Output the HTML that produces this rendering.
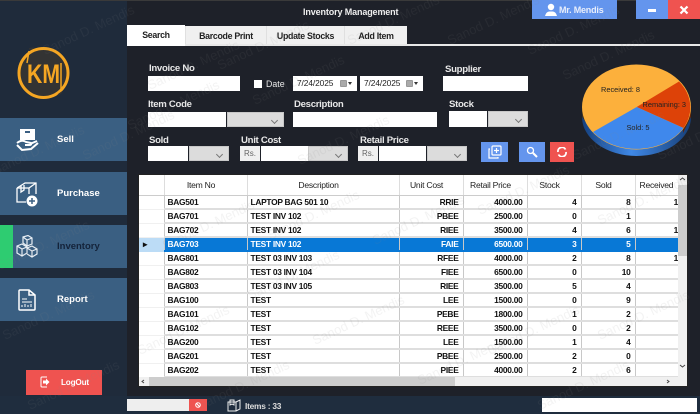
<!DOCTYPE html>
<html><head><meta charset="utf-8"><style>
*{box-sizing:border-box}
html,body{margin:0;padding:0;background:#1e2129}
body{width:700px;height:414px;overflow:hidden;position:relative;font-family:"Liberation Sans",sans-serif;font-size:9px;color:#111}
#root{position:absolute;left:0;top:0;width:700px;height:414px;background:#1e2129;filter:blur(.3px)}
.a{position:absolute}
.l{position:absolute;color:#e8e8e8;font-size:9.6px;letter-spacing:-.3px;font-weight:bold;line-height:12px;white-space:nowrap}
.w{position:absolute;background:#fff}
.g{position:absolute;background:#dcdcdc;border:1px solid #c8c8c8}
.g:after{content:"";position:absolute;right:6px;top:5px;width:4px;height:4px;border-right:1px solid #777;border-bottom:1px solid #777;transform:rotate(45deg)}
.rs{position:absolute;background:#f0f0f0;color:#666;text-align:center;font-size:8px;line-height:15px}
.nav{position:absolute;left:0;width:127px;height:43px;background:#3a5f82;color:#fff;font-weight:bold;font-size:9.5px;line-height:43px;padding-left:57px}
.tab{position:absolute;top:26px;height:18px;background:#f0f0f0;text-align:center;font-weight:bold;font-size:8.8px;letter-spacing:-.3px;line-height:20px;color:#222;border-left:1px solid #e0e0e0}
.dp{position:absolute;top:76px;height:15px;background:#fff;font-size:8.4px;letter-spacing:-.1px;line-height:15px;padding-left:4px;color:#222}
.dp i{position:absolute;right:10px;top:4px;width:7px;height:7px;background:#aaa;border:1px solid #999;border-radius:1px}
.dp b{position:absolute;right:5px;top:6px;width:0;height:0;border-left:2px solid transparent;border-right:2px solid transparent;border-top:3px solid #333}
#grid{position:absolute;left:138px;top:174px;width:550px;height:213px;background:#fff;border:1px solid #222;overflow:hidden}
table{border-collapse:collapse;table-layout:fixed;position:absolute;left:0;top:0;width:539px;font-size:8.4px;letter-spacing:-.28px;font-weight:bold;color:#111}
td,th{height:14px;padding:0 3px;border-right:1px solid #c8c8c8;border-bottom:2px solid #dedede;overflow:hidden;white-space:nowrap;line-height:12px}
th{height:20px;font-weight:normal;font-size:8.6px;letter-spacing:-.25px;color:#222;border-right:1px solid #ddd;border-bottom:1px solid #ccc;padding-right:12px}
td:nth-child(1){border-bottom:1px solid #f0f0f0}
td:nth-child(n+4){text-align:right;padding-right:4px}
td:nth-child(8){padding-right:0;border-right:0}
tr.s td{background:#0878d6;color:#fff;border-bottom-color:#0878d6}
tr.s td:first-child{background:#bcdcf6;color:#111;border-bottom-color:#bcdcf6;padding-left:4px;text-align:left}
</style></head><body><div id="root">
<div class="a" style="left:0;top:0;width:127px;height:414px;background:#1f2b3b"></div>
<div class="a" style="left:0;top:396px;width:700px;height:18px;background:#1f2d3e"></div>
<div class="a" style="left:0;top:0;width:700px;height:1px;background:#3a3a3a"></div>

<svg class="a" style="left:15px;top:45px" width="58" height="58" viewBox="0 0 58 58">
<circle cx="28.500" cy="28" r="24.500" fill="#333" stroke="#f5a623" stroke-width="3"/>
<path d="M12 18 L14 6 M46 18 L46 46" stroke="#f5a623" stroke-width="1.500" fill="none"/>
<path d="M14 4 L19 3 M43 50 L47 47" stroke="#333" stroke-width="1.500" fill="none"/>
<text x="12" y="38" font-family="Liberation Sans" font-weight="bold" font-size="27" fill="#f5a623" textLength="33" lengthAdjust="spacingAndGlyphs">KM</text>
</svg>

<div class="nav" style="top:118px">Sell</div>
<div class="nav" style="top:172px">Purchase</div>
<div class="nav" style="top:225px;color:#14233a;padding-left:57px"><span class="a" style="left:0;top:0;width:13px;height:43px;background:#2ecc71"></span>Inventory</div>
<div class="nav" style="top:278px">Report</div>

<svg class="a" style="left:14px;top:126px" width="26" height="26" viewBox="0 0 26 26"><rect x="6" y="3" width="15" height="11" fill="#fff"/><rect x="11" y="5" width="5" height="2" fill="#3a5f82"/><path d="M3 17 Q8 13 12 16 L17 17 Q18 19 15 19 L11 19 M16 18 L23 15 M3 19 L8 24 L17 23 L24 17" stroke="#fff" stroke-width="2" fill="none"/></svg>
<svg class="a" style="left:15px;top:181px" width="24" height="26" viewBox="0 0 24 26"><path d="M2 7 L10 2 L21 2 L21 13 M2 7 L2 21 L11 21 M2 7 L14 7 L21 2 M14 7 L14 13 M6 5 L6 11 L9 9 L9 4" stroke="#fff" stroke-width="1.300" fill="none"/><circle cx="17" cy="20" r="5.500" fill="#fff"/><path d="M14 20H20M17 17V23" stroke="#3a5f82" stroke-width="1.500"/></svg>
<svg class="a" style="left:15px;top:235px" width="24" height="24" viewBox="0 0 24 24" fill="none" stroke="#e8eef4" stroke-width="1.200"><path d="M8 2 L13 0.500 L17 3 L17 9 L12 11 L8 8 Z M8 2 L12 5 L17 3 M12 5 L12 11"/><path d="M2 11 L7 9 L12 12 L12 18 L7 21 L2 18 Z M2 11 L7 14 L12 12 M7 14 L7 21"/><path d="M12 13 L17 11 L22 14 L22 19 L17 22 L12 19 M12 13 L17 16 L22 14 M17 16 L17 22"/></svg>
<svg class="a" style="left:18px;top:289px" width="18" height="22" viewBox="0 0 18 22" fill="none" stroke="#fff" stroke-width="1.500"><path d="M1 2 Q1 1 2 1 L11 1 L17 6 L17 20 Q17 21 16 21 L2 21 Q1 21 1 20 Z M11 1 L11 6 L17 6"/><path d="M4 10H9M4 13H14M4 18V16M7 18V15M10 18V16M13 18V15" stroke-width="1"/></svg>

<div class="a" style="left:26px;top:370px;width:76px;height:25px;background:#ef5350;color:#fff;font-weight:bold;font-size:8.200px;letter-spacing:-.2px;line-height:25px;padding-left:35px">LogOut</div>
<svg class="a" style="left:40px;top:376px" width="10" height="12" viewBox="0 0 10 12"><path d="M7 1 L2 1 Q1 1 1 2 L1 10 Q1 11 2 11 L7 11" stroke="#fff" fill="none"/><path d="M3 4.500H6V2.500L9.500 6L6 9.500V7.500H3Z" fill="#fff"/></svg>

<div class="a" style="left:303px;top:6px;color:#eee;font-weight:bold;font-size:9px;letter-spacing:-.13px;line-height:12px;white-space:nowrap">Inventory Management</div>
<div class="a" style="left:532px;top:0;width:85px;height:19px;background:#6495ed;color:#e8eefc;font-weight:bold;font-size:9px;letter-spacing:-.2px;line-height:20px;padding-left:27px">Mr. Mendis</div>
<svg class="a" style="left:544px;top:3px" width="14" height="14" viewBox="0 0 14 14"><circle cx="7" cy="4" r="3.200" fill="#fff"/><path d="M1 13 Q2 9 5 8.500 L9 8.500 Q12 9 13 13Z" fill="#fff"/></svg>
<div class="a" style="left:636px;top:0;width:32px;height:19px;background:#6495ed"></div>
<div class="a" style="left:648px;top:9px;width:8px;height:3px;background:#fff"></div>
<div class="a" style="left:668px;top:0;width:32px;height:19px;background:#ef5350"></div>
<svg class="a" style="left:679px;top:5px" width="10" height="10" viewBox="0 0 10 10"><path d="M1.500 1.500L8.500 8.500M8.500 1.500L1.500 8.500" stroke="#fff" stroke-width="2.200"/></svg>

<div class="a" style="left:127px;top:44px;width:573px;height:2px;background:#e8e8e8"></div>
<div class="a" style="left:127px;top:25px;width:58px;height:21px;background:#fff;text-align:center;font-weight:bold;font-size:8.800px;letter-spacing:-.3px;line-height:20px;color:#222">Search</div>
<div class="tab" style="left:185px;width:81px">Barcode Print</div>
<div class="tab" style="left:266px;width:78px">Update Stocks</div>
<div class="tab" style="left:344px;width:63px">Add Item</div>

<div class="l" style="left:149px;top:63px">Invoice No</div>
<div class="w" style="left:148px;top:76px;width:92px;height:15px"></div>
<div class="w" style="left:254px;top:80px;width:8px;height:8px"></div>
<div class="l" style="left:266px;top:78px;font-size:8.800px;letter-spacing:0;font-weight:normal">Date</div>
<div class="dp" style="left:293px;width:64px">7/24/2025<i></i><b></b></div>
<div class="dp" style="left:360px;width:63px">7/24/2025<i></i><b></b></div>
<div class="l" style="left:445px;top:64px">Supplier</div>
<div class="w" style="left:443px;top:76px;width:85px;height:15px"></div>

<div class="l" style="left:148px;top:99px">Item Code</div>
<div class="w" style="left:148px;top:112px;width:78px;height:15px"></div>
<div class="g" style="left:227px;top:112px;width:57px;height:15px"></div>
<div class="l" style="left:294px;top:99px">Description</div>
<div class="w" style="left:293px;top:112px;width:144px;height:15px"></div>
<div class="l" style="left:449px;top:99px">Stock</div>
<div class="w" style="left:449px;top:111px;width:38px;height:16px"></div>
<div class="g" style="left:488px;top:111px;width:40px;height:16px"></div>

<div class="l" style="left:149px;top:135px">Sold</div>
<div class="w" style="left:148px;top:146px;width:40px;height:15px"></div>
<div class="g" style="left:189px;top:146px;width:40px;height:15px"></div>
<div class="l" style="left:241px;top:135px">Unit Cost</div>
<div class="rs" style="left:240px;top:146px;width:20px;height:15px">Rs.</div>
<div class="w" style="left:261px;top:146px;width:47px;height:15px"></div>
<div class="g" style="left:308px;top:146px;width:40px;height:15px"></div>
<div class="l" style="left:360px;top:135px">Retail Price</div>
<div class="rs" style="left:358px;top:146px;width:20px;height:15px">Rs.</div>
<div class="w" style="left:379px;top:146px;width:47px;height:15px"></div>
<div class="g" style="left:427px;top:146px;width:40px;height:15px"></div>

<div class="a" style="left:481px;top:142px;width:27px;height:20px;background:#6495ed"></div>
<svg class="a" style="left:488px;top:145px" width="14" height="14" viewBox="0 0 14 14" fill="none" stroke="#fff" stroke-width="1.200"><rect x="4" y="1" width="9" height="9" rx="1"/><path d="M2 4 L1 4 L1 13 L10 13 L10 12 M8.500 3V8M6 5.500H11"/></svg>
<div class="a" style="left:519px;top:142px;width:26px;height:20px;background:#6495ed"></div>
<svg class="a" style="left:526px;top:146px" width="12" height="12" viewBox="0 0 12 12" fill="none" stroke="#fff"><circle cx="4.500" cy="4.500" r="3" stroke-width="1.300"/><path d="M7 7L11 11" stroke-width="2"/></svg>
<div class="a" style="left:550px;top:142px;width:24px;height:20px;background:#ef5350"></div>
<svg class="a" style="left:557px;top:147px" width="10" height="10" viewBox="0 0 10 10" fill="none" stroke="#fff" stroke-width="1.800"><path d="M8.500 2.500 A4 4 0 0 0 1 5M1.500 7.500A4 4 0 0 0 9 5"/></svg>

<svg class="a" style="left:575px;top:58px" width="125" height="104" viewBox="575 58 125 104">
<defs><linearGradient id="d" x1="0" x2="1" y1="0" y2="0"><stop offset="0" stop-color="#15407e"/><stop offset=".45" stop-color="#3f88e6"/><stop offset="1" stop-color="#173f78"/></linearGradient></defs>
<path d="M582 107 L582 117 A54.500 39 0 0 0 691 117 L691 107Z" fill="url(#d)"/>
<path d="M582 107 L582 117 L593 132 L593 124Z" fill="#3d3020"/>
<path d="M683 123 L691 107 L691 117 L683 133Z" fill="#5c2408"/>
<ellipse cx="636.500" cy="107" rx="54.500" ry="42.500" fill="#fcb03c"/>
<path d="M636.700 107 L679 81.500 A54.500 42.500 0 0 1 683.500 128 Z" fill="#dd4208"/>
<path d="M636.700 107 L683.500 128 A54.500 42.500 0 0 1 593 132 Z" fill="#3f88ec"/>
<text x="601" y="92" font-family="Liberation Sans" font-size="7.400" fill="#222">Received: 8</text>
<text x="642.500" y="107" font-family="Liberation Sans" font-size="7.400" fill="#222">Remaining: 3</text>
<text x="626.500" y="130" font-family="Liberation Sans" font-size="7.400" fill="#222">Sold: 5</text>
</svg>

<div id="grid">
<table>
<colgroup><col style="width:25px"><col style="width:83px"><col style="width:152px"><col style="width:64px"><col style="width:64px"><col style="width:54px"><col style="width:54px"><col style="width:43px"></colgroup>
<tr><th></th><th>Item No</th><th>Description</th><th>Unit Cost</th><th>Retail Price</th><th>Stock</th><th>Sold</th><th style="border-right:0;text-align:left;padding-right:0;padding-left:4px">Received</th></tr>
<tr><td></td><td>BAG501</td><td>LAPTOP BAG 501 10</td><td>RRIE</td><td>4000.00</td><td>4</td><td>8</td><td>1</td></tr>
<tr><td></td><td>BAG701</td><td>TEST INV 102</td><td>PBEE</td><td>2500.00</td><td>0</td><td>1</td><td></td></tr>
<tr><td></td><td>BAG702</td><td>TEST INV 102</td><td>RIEE</td><td>3500.00</td><td>4</td><td>6</td><td>1</td></tr>
<tr class="s"><td>&#9656;</td><td>BAG703</td><td>TEST INV 102</td><td>FAIE</td><td>6500.00</td><td>3</td><td>5</td><td></td></tr>
<tr><td></td><td>BAG801</td><td>TEST 03 INV 103</td><td>RFEE</td><td>4000.00</td><td>2</td><td>8</td><td>1</td></tr>
<tr><td></td><td>BAG802</td><td>TEST 03 INV 104</td><td>FIEE</td><td>6500.00</td><td>0</td><td>10</td><td></td></tr>
<tr><td></td><td>BAG803</td><td>TEST 03 INV 105</td><td>RIEE</td><td>3500.00</td><td>5</td><td>4</td><td></td></tr>
<tr><td></td><td>BAG100</td><td>TEST</td><td>LEE</td><td>1500.00</td><td>0</td><td>9</td><td></td></tr>
<tr><td></td><td>BAG101</td><td>TEST</td><td>PEBE</td><td>1800.00</td><td>1</td><td>2</td><td></td></tr>
<tr><td></td><td>BAG102</td><td>TEST</td><td>REEE</td><td>3500.00</td><td>0</td><td>2</td><td></td></tr>
<tr><td></td><td>BAG200</td><td>TEST</td><td>LEE</td><td>1500.00</td><td>1</td><td>4</td><td></td></tr>
<tr><td></td><td>BAG201</td><td>TEST</td><td>PBEE</td><td>2500.00</td><td>2</td><td>0</td><td></td></tr>
<tr><td></td><td>BAG202</td><td>TEST</td><td>PIEE</td><td>4000.00</td><td>2</td><td>6</td><td></td></tr>
</table>
<div class="a" style="left:539px;top:0;width:9px;height:202px;background:#f0f0f0"></div>
<div class="a" style="left:539px;top:10px;width:9px;height:71px;background:#cdcdcd"></div>
<div class="a" style="left:0;top:202px;width:548px;height:9px;background:#f0f0f0"></div>
<div class="a" style="left:10px;top:202px;width:306px;height:9px;background:#cdcdcd"></div>
<svg class="a" style="left:0;top:0" width="548" height="211"><path d="M541 5L543.500 3L546 5M541 190L543.500 192L546 190M5 205L3 206.500L5 208M528 205L530 206.500L528 208" stroke="#444" fill="none"/></svg>
</div>

<div class="a" style="left:127px;top:399px;width:62px;height:12px;background:#eee"></div>
<div class="a" style="left:189px;top:399px;width:18px;height:12px;background:#ef5350"></div>
<svg class="a" style="left:195px;top:402px" width="6" height="6" viewBox="0 0 6 6" fill="none" stroke="#fff"><circle cx="3" cy="3" r="2.300"/><path d="M1.500 1.500L4.500 4.500"/></svg>
<svg class="a" style="left:227px;top:399px" width="14" height="13" viewBox="0 0 14 13" fill="none" stroke="#eee"><path d="M1 3L9 3L9 12L1 12ZM9 3L13 1L13 10L9 12M3 3L3 1L7 1L7 6L5 5L3 6Z"/></svg>
<div class="a" style="left:245px;top:401px;color:#ddd;font-weight:bold;font-size:8.400px;letter-spacing:-.25px;line-height:11px">Items : 33</div>
<div class="a" style="left:542px;top:398px;width:155px;height:14px;background:#fff"></div>

<svg class="a" style="left:0;top:0;pointer-events:none" width="700" height="414">
<g font-family="Liberation Sans" font-size="13" fill="#8a8a8a" fill-opacity=".1">
<text transform="translate(-5,175) rotate(-25)">Sanod D. Mendis</text>
<text transform="translate(45,55) rotate(-25)">Sanod D. Mendis</text>
<text transform="translate(85,160) rotate(-25)">Sanod D. Mendis</text>
<text transform="translate(0,270) rotate(-25)">Sanod D. Mendis</text>
<text transform="translate(5,340) rotate(-25)">Sanod D. Mendis</text>
<text transform="translate(30,410) rotate(-25)">Sanod D. Mendis</text>
<text transform="translate(150,90) rotate(-25)">Sanod D. Mendis</text>
<text transform="translate(130,130) rotate(-25)">Sanod D. Mendis</text>
<text transform="translate(220,70) rotate(-25)">Sanod D. Mendis</text>
<text transform="translate(255,105) rotate(-25)">Sanod D. Mendis</text>
<text transform="translate(300,165) rotate(-25)">Sanod D. Mendis</text>
<text transform="translate(350,45) rotate(-25)">Sanod D. Mendis</text>
<text transform="translate(450,45) rotate(-25)">Sanod D. Mendis</text>
<text transform="translate(530,55) rotate(-25)">Sanod D. Mendis</text>
<text transform="translate(565,80) rotate(-25)">Sanod D. Mendis</text>
<text transform="translate(575,160) rotate(-25)">Sanod D. Mendis</text>
<text transform="translate(660,160) rotate(-25)">Sanod D. Mendis</text>
<text transform="translate(165,250) rotate(-25)">Sanod D. Mendis</text>
<text transform="translate(270,240) rotate(-25)">Sanod D. Mendis</text>
<text transform="translate(375,245) rotate(-25)">Sanod D. Mendis</text>
<text transform="translate(480,215) rotate(-25)">Sanod D. Mendis</text>
<text transform="translate(600,225) rotate(-25)">Sanod D. Mendis</text>
<text transform="translate(140,355) rotate(-25)">Sanod D. Mendis</text>
<text transform="translate(250,300) rotate(-25)">Sanod D. Mendis</text>
<text transform="translate(315,345) rotate(-25)">Sanod D. Mendis</text>
<text transform="translate(420,385) rotate(-25)">Sanod D. Mendis</text>
<text transform="translate(490,355) rotate(-25)">Sanod D. Mendis</text>
<text transform="translate(600,340) rotate(-25)">Sanod D. Mendis</text>
<text transform="translate(200,410) rotate(-25)">Sanod D. Mendis</text>
<text transform="translate(540,410) rotate(-25)">Sanod D. Mendis</text>
</g></svg>
</div></body></html>
